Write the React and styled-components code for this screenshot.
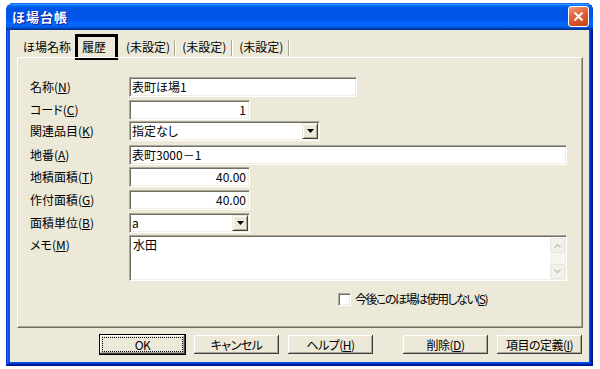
import React from "react";
import styled, { createGlobalStyle } from "styled-components";

const GlobalStyle = createGlobalStyle`
  html, body {
    margin: 0;
    padding: 0;
    background: #fff;
  }
  body {
    font-family: "Noto Sans CJK JP", "Noto Sans", sans-serif;
    font-size: 12px;
    font-feature-settings: "palt";
    color: #000;
  }
`;

const Window = styled.div`
  margin: 3px 0 0 6px;
  width: 587px;
  height: 363px;
  border-radius: 8px 8px 0 0;
  overflow: hidden;
  background: #0054e3;
  box-shadow: inset -1px -1px #00138c, inset 1px 1px #0831d9,
    inset -2px -2px #001ea0, inset 2px 2px #166aee,
    inset -3px -3px #003bda, inset 3px 3px #0855dd;
  display: flex;
  flex-direction: column;
`;

const TitleBar = styled.div`
  height: 27px;
  flex: none;
  display: flex;
  align-items: center;
  justify-content: space-between;
  padding: 0 4px 0 6px;
  background: linear-gradient(
    180deg,
    #0058ee 0%,
    #3593ff 4%,
    #288eff 6%,
    #127dff 8%,
    #036ffc 10%,
    #0262ee 14%,
    #0057e5 20%,
    #0054e3 24%,
    #0055eb 56%,
    #005bf5 66%,
    #026afe 76%,
    #0062ef 86%,
    #0052d6 92%,
    #0040ab 94%,
    #003092 100%
  );
`;

const Title = styled.span`
  color: #fff;
  font-weight: bold;
  font-size: 13px;
  letter-spacing: 1px;
  line-height: 16px;
  text-shadow: 1px 1px #0f1089;
  font-feature-settings: normal;
`;

const CloseButton = styled.div`
  width: 21px;
  height: 21px;
  box-sizing: border-box;
  border: 1px solid #fff;
  border-radius: 3px;
  display: flex;
  align-items: center;
  justify-content: center;
  background: linear-gradient(160deg, #f0a184 0%, #e2683f 35%, #d8532b 65%, #c3431c 100%);
`;

const Body = styled.div`
  flex: 1;
  margin: 0 4px 4px;
  background: #ece9d8;
  padding: 7px 6px 0 7px;
  display: flex;
  flex-direction: column;
`;

const TabStrip = styled.div`
  height: 20px;
  display: flex;
  align-items: center;
  margin-left: 3px;
`;

const Tab = styled.div`
  height: 20px;
  display: flex;
  align-items: center;
  padding: 0 ${(p) => p.$right}px 0 ${(p) => p.$left}px;
  line-height: 14px;
  white-space: nowrap;
  outline: ${(p) => (p.$marked ? "3px solid #000" : "none")};
`;

const TabSep = styled.span`
  width: 1px;
  height: 16px;
  background: #aca899;
  border-right: 1px solid #fff;
  margin-top: 2px;
`;

const Panel = styled.div`
  height: 271px;
  box-sizing: border-box;
  border: 1px solid;
  border-color: #fff #716f64 #716f64 #fff;
  box-shadow: inset -1px -1px #aca899;
  padding: 19px 0 0 12px;
  display: flex;
  flex-direction: column;
`;

const Row = styled.div`
  display: flex;
  align-items: ${(p) => (p.$top ? "flex-start" : "center")};
  margin-top: ${(p) => p.$mt || 0}px;
`;

const Label = styled.div`
  width: 99px;
  flex: none;
  line-height: 14px;
  padding-top: ${(p) => (p.$top ? 3 : 0)}px;
`;

const U = styled.span`
  text-decoration: underline;
  text-underline-offset: 1px;
`;

const Edit = styled.div`
  width: ${(p) => p.$w}px;
  height: ${(p) => p.$h || 20}px;
  box-sizing: border-box;
  background: #fff;
  border: 1px solid;
  border-color: #aca899 #fff #fff #aca899;
  box-shadow: inset 1px 1px #716f64, inset -1px -1px #f1efe2;
  display: flex;
  align-items: ${(p) => (p.$top ? "flex-start" : "center")};
  justify-content: ${(p) => (p.$right ? "flex-end" : "flex-start")};
  padding: ${(p) => (p.$top ? "2px 1px 1px 2px" : "0 3px 0 2px")};
  line-height: 14px;
`;

const ComboText = styled.span`
  flex: 1;
`;

const ComboButton = styled.div`
  width: 16px;
  height: 16px;
  box-sizing: border-box;
  flex: none;
  margin-right: -2px;
  background: #ece9d8;
  border: 1px solid;
  border-color: #ece9d8 #404040 #404040 #ece9d8;
  box-shadow: inset 1px 1px #fff, inset -1px -1px #aca899;
  display: flex;
  align-items: center;
  justify-content: center;
`;

const MemoText = styled.div`
  flex: 1;
  padding-left: 1px;
`;

const ScrollBar = styled.div`
  width: 15px;
  align-self: stretch;
  display: flex;
  flex-direction: column;
  background: #f6f5f0;
`;

const ScrollArrow = styled.div`
  height: 15px;
  box-sizing: border-box;
  border: 1px solid #e8e6dc;
  border-radius: 2px;
  background: #f2f1ec;
  display: flex;
  align-items: center;
  justify-content: center;
`;

const ScrollTrack = styled.div`
  flex: 1;
`;

const CheckRow = styled.div`
  display: flex;
  align-items: center;
  margin-top: 11px;
  padding-left: 308px;
  line-height: 14px;
`;

const CheckText = styled.span`
  letter-spacing: -1.5px;
`;

const CheckBox = styled.span`
  width: 13px;
  height: 13px;
  box-sizing: border-box;
  background: #fff;
  border: 1px solid;
  border-color: #aca899 #fff #fff #aca899;
  box-shadow: inset 1px 1px #716f64, inset -1px -1px #f1efe2;
  margin-right: 4px;
`;

const ButtonBar = styled.div`
  display: flex;
  justify-content: flex-end;
  margin-top: 6px;
  gap: 7px;
`;

const Button = styled.div`
  width: 87px;
  height: 21px;
  box-sizing: border-box;
  margin-left: ${(p) => p.$ml || 0}px;
  background: #ece9d8;
  border: 1px solid ${(p) => (p.$default ? "#000" : "transparent")};
  box-shadow: inset -1px -1px #404040, inset 1px 1px #fff,
    inset -2px -2px #aca899;
  display: flex;
  align-items: center;
  justify-content: center;
  padding: 2px;
  line-height: 14px;
  letter-spacing: -0.5px;
`;

const FocusRect = styled.span`
  flex: 1;
  align-self: stretch;
  border: 1px dotted #000;
  display: flex;
  align-items: center;
  justify-content: center;
`;

const Arrow = () => (
  <svg width="7" height="4" viewBox="0 0 7 4">
    <path d="M0 0h7L3.5 4z" fill="#000" />
  </svg>
);

const Chevron = ({ up }) => (
  <svg width="7" height="5" viewBox="0 0 7 5">
    <path
      d={up ? "M0.5 4.5L3.5 1.5L6.5 4.5" : "M0.5 0.5L3.5 3.5L6.5 0.5"}
      fill="none"
      stroke="#c3c2b8"
      strokeWidth="1.3"
    />
  </svg>
);

const App = () => {
  return (
    <>
      <GlobalStyle />
      <Window>
        <TitleBar>
          <Title>ほ場台帳</Title>
          <CloseButton>
            <svg width="11" height="11" viewBox="0 0 11 11">
              <path d="M1.5 1.5L9.5 9.5M9.5 1.5L1.5 9.5" stroke="#fff" strokeWidth="2" />
            </svg>
          </CloseButton>
        </TitleBar>
        <Body>
          <TabStrip>
            <Tab $left={3} $right={7}>ほ場名称</Tab>
            <Tab $left={4} $right={9} $marked>履歴</Tab>
            <Tab $left={11} $right={4}>(未設定)</Tab>
            <TabSep />
            <Tab $left={6} $right={5}>(未設定)</Tab>
            <TabSep />
            <Tab $left={6} $right={5}>(未設定)</Tab>
            <TabSep />
          </TabStrip>
          <Panel>
            <Row>
              <Label>名称(<U>N</U>)</Label>
              <Edit $w={228}>表町ほ場1</Edit>
            </Row>
            <Row $mt={3}>
              <Label>コード(<U>C</U>)</Label>
              <Edit $w={121} $right>1</Edit>
            </Row>
            <Row $mt={1}>
              <Label>関連品目(<U>K</U>)</Label>
              <Edit $w={191}>
                <ComboText>指定なし</ComboText>
                <ComboButton><Arrow /></ComboButton>
              </Edit>
            </Row>
            <Row $mt={4}>
              <Label>地番(<U>A</U>)</Label>
              <Edit $w={438}>表町3000－1</Edit>
            </Row>
            <Row $mt={2}>
              <Label>地積面積(<U>T</U>)</Label>
              <Edit $w={121} $right>40.00</Edit>
            </Row>
            <Row $mt={3}>
              <Label>作付面積(<U>G</U>)</Label>
              <Edit $w={121} $right>40.00</Edit>
            </Row>
            <Row $mt={3}>
              <Label>面積単位(<U>B</U>)</Label>
              <Edit $w={121}>
                <ComboText>a</ComboText>
                <ComboButton><Arrow /></ComboButton>
              </Edit>
            </Row>
            <Row $mt={2} $top>
              <Label $top>メモ(<U>M</U>)</Label>
              <Edit $w={438} $h={46} $top>
                <MemoText>水田</MemoText>
                <ScrollBar>
                  <ScrollArrow><Chevron up /></ScrollArrow>
                  <ScrollTrack />
                  <ScrollArrow><Chevron /></ScrollArrow>
                </ScrollBar>
              </Edit>
            </Row>
            <CheckRow>
              <CheckBox />
              <CheckText>今後このほ場は使用しない(<U>S</U>)</CheckText>
            </CheckRow>
          </Panel>
          <ButtonBar>
            <Button $default>
              <FocusRect>OK</FocusRect>
            </Button>
            <Button>キャンセル</Button>
            <Button>ヘルプ(<U>H</U>)</Button>
            <Button $ml={21}>削除(<U>D</U>)</Button>
            <Button>項目の定義(<U>I</U>)</Button>
          </ButtonBar>
        </Body>
      </Window>
    </>
  );
};

export default App;
